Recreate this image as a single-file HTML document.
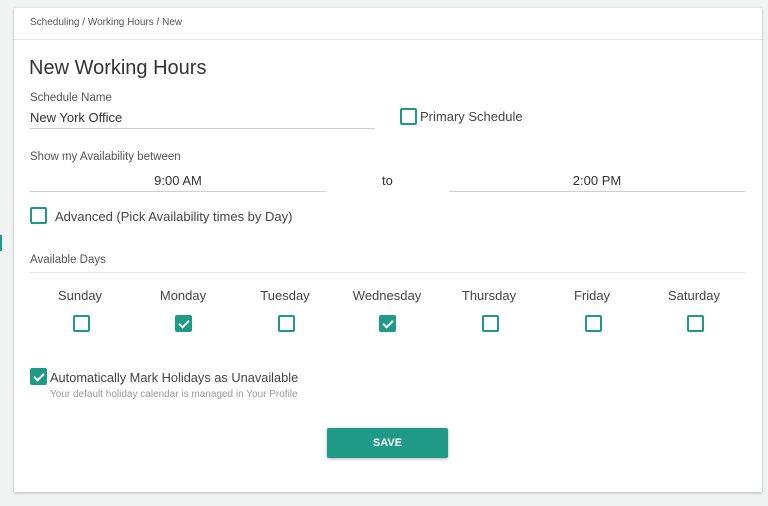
<!DOCTYPE html>
<html><head><style>
body{margin:0;width:768px;height:506px;background:#f2f4f3;font-family:"Liberation Sans",sans-serif;position:relative;overflow:hidden;color:#333}
.card{position:absolute;left:14px;top:8px;width:748px;height:484px;background:#fff;box-shadow:0 1px 3px rgba(0,0,0,.25)}
.a{position:absolute;white-space:nowrap}
.cb{position:absolute;width:13px;height:13px;border:2px solid #1f9a86;border-radius:2px;background:#fff}
.cb.on{background:#1f9a86}
.cb.on:after{content:"";position:absolute;left:4px;top:1px;width:4px;height:8px;border:solid #fff;border-width:0 2px 2px 0;transform:rotate(45deg)}
.line{position:absolute;height:1px;background:#cfcfcf}
.day{position:absolute;top:288px;width:100px;margin-left:-50px;text-align:center;font-size:13px;color:#444}
</style></head><body>
<div class="a" style="left:0;top:235px;width:2px;height:16px;background:#1f9a86"></div>
<div class="card"></div>
<div class="a" style="left:30px;top:17px;font-size:10px;color:#555">Scheduling / Working Hours / New</div>
<div class="line" style="left:14px;top:39px;width:748px;background:#e6e6e6"></div>
<div class="a" style="left:29px;top:57px;font-size:20px;color:#333">New Working Hours</div>
<div class="a" style="left:30px;top:92px;font-size:11.5px;color:#555">Schedule Name</div>
<div class="a" style="left:30px;top:110px;font-size:13px;color:#333">New York Office</div>
<div class="line" style="left:30px;top:128px;width:345px"></div>
<div class="cb" style="left:400px;top:108px"></div>
<div class="a" style="left:420px;top:109px;font-size:13px;color:#444">Primary Schedule</div>
<div class="a" style="left:30px;top:151px;font-size:11.5px;color:#555">Show my Availability between</div>
<div class="a" style="left:30px;top:173px;width:296px;text-align:center;font-size:13px">9:00 AM</div>
<div class="line" style="left:30px;top:191px;width:296px"></div>
<div class="a" style="left:382px;top:173px;font-size:13px">to</div>
<div class="a" style="left:449px;top:173px;width:296px;text-align:center;font-size:13px">2:00 PM</div>
<div class="line" style="left:449px;top:191px;width:296px"></div>
<div class="cb" style="left:30px;top:207px"></div>
<div class="a" style="left:55px;top:209px;font-size:13px;color:#444">Advanced (Pick Availability times by Day)</div>
<div class="a" style="left:30px;top:254px;font-size:11.5px;color:#555">Available Days</div>
<div class="line" style="left:30px;top:272px;width:715px;background:#e6e6e6"></div>
<div class="day" style="left:80px">Sunday</div><div class="cb" style="left:73px;top:315px"></div>
<div class="day" style="left:183px">Monday</div><div class="cb on" style="left:175px;top:315px"></div>
<div class="day" style="left:285px">Tuesday</div><div class="cb" style="left:278px;top:315px"></div>
<div class="day" style="left:387px">Wednesday</div><div class="cb on" style="left:379px;top:315px"></div>
<div class="day" style="left:489px">Thursday</div><div class="cb" style="left:482px;top:315px"></div>
<div class="day" style="left:592px">Friday</div><div class="cb" style="left:585px;top:315px"></div>
<div class="day" style="left:694px">Saturday</div><div class="cb" style="left:687px;top:315px"></div>
<div class="cb on" style="left:30px;top:368px"></div>
<div class="a" style="left:50px;top:370px;font-size:12.8px;color:#444">Automatically Mark Holidays as Unavailable</div>
<div class="a" style="left:50px;top:389px;font-size:10px;color:#999">Your default holiday calendar is managed in Your Profile</div>
<div class="a" style="left:327px;top:428px;width:121px;height:30px;background:#1f9a86;color:#fff;font-size:11px;font-weight:bold;text-align:center;line-height:30px;border-radius:2px;box-shadow:0 1px 3px rgba(0,0,0,.3)">SAVE</div>
</body></html>
